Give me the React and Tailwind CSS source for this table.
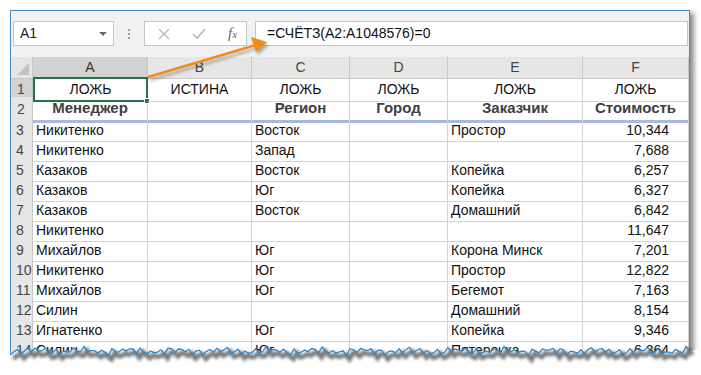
const cols = ['A', 'B', 'C', 'D', 'E', 'F'];
const gridCols = 'grid grid-cols-[22px_115px_104px_98px_98px_135px_106px]';

const rows = [
  ['Никитенко', '', 'Восток', '', 'Простор', '10,344'],
  ['Никитенко', '', 'Запад', '', '', '7,688'],
  ['Казаков', '', 'Восток', '', 'Копейка', '6,257'],
  ['Казаков', '', 'Юг', '', 'Копейка', '6,327'],
  ['Казаков', '', 'Восток', '', 'Домашний', '6,842'],
  ['Никитенко', '', '', '', '', '11,647'],
  ['Михайлов', '', 'Юг', '', 'Корона Минск', '7,201'],
  ['Никитенко', '', 'Юг', '', 'Простор', '12,822'],
  ['Михайлов', '', 'Юг', '', 'Бегемот', '7,163'],
  ['Силин', '', '', '', 'Домашний', '8,154'],
  ['Игнатенко', '', 'Юг', '', 'Копейка', '9,346'],
  ['Силин', '', 'Юг', '', 'Пятерочка', '6,364'],
];

const flags = ['ЛОЖЬ', 'ИСТИНА', 'ЛОЖЬ', 'ЛОЖЬ', 'ЛОЖЬ', 'ЛОЖЬ'];
const titles = ['Менеджер', '', 'Регион', 'Город', 'Заказчик', 'Стоимость'];

// jagged line where the sheet is "torn off"
function tornPoints() {
  const pts = [];
  let i = 0;
  for (let x = 0; x <= 701; x += 3.5) {
    const y = 16 + 2.4 * Math.sin(i * 2.3) + 1.3 * Math.sin(i * 0.47) + ((i * 5) % 4) * 0.7 - 1;
    pts.push([x, y]);
    i++;
  }
  return pts;
}

function TornEdge() {
  const pts = tornPoints();
  const line = pts.map(([x, y], i) => `${i ? 'L' : 'M'}${x.toFixed(1)} ${y.toFixed(1)}`).join(' ');
  const inner = pts.filter(([x]) => x >= 8 && x <= 692);
  const edge = inner.map(([x, y], i) => `${i ? 'L' : 'M'}${x.toFixed(1)} ${y.toFixed(1)}`).join(' ');
  const shadow = inner.map(([x, y], i) => `${i ? 'L' : 'M'}${(x + 3).toFixed(1)} ${(y + 4).toFixed(1)}`).join(' ');
  return (
    <svg className="absolute left-0 top-[335px]" width="701" height="40" viewBox="0 0 701 40">
      <defs>
        <filter id="soft" x="-5%" y="-100%" width="110%" height="300%">
          <feGaussianBlur stdDeviation="1.6" />
        </filter>
      </defs>
      <path d={`${line} L701 40 L0 40 Z`} fill="#fff" />
      <path d={shadow} stroke="#5f5f5f" strokeWidth="4.5" fill="none" filter="url(#soft)" opacity="0.85" />
      <path d={edge} stroke="#2f86c8" strokeWidth="1.3" fill="none" />
    </svg>
  );
}

function Arrow() {
  return (
    <svg className="pointer-events-none absolute left-0 top-0" width="701" height="120" viewBox="0 0 701 120">
      <defs>
        <filter id="ash" x="-10%" y="-50%" width="120%" height="200%">
          <feGaussianBlur stdDeviation="1.5" />
        </filter>
      </defs>
      <g opacity="0.45" filter="url(#ash)" transform="translate(2 3)">
        <line x1="148" y1="77" x2="256" y2="45" stroke="#555" strokeWidth="2.5" />
        <path d="M267 42 L251 37 L256 52 Z" fill="#555" />
      </g>
      <line x1="148" y1="77" x2="256" y2="45" stroke="#f28a1a" strokeWidth="2.5" />
      <path d="M267 42 L251 37 L256 52 Z" fill="#f28a1a" />
    </svg>
  );
}

function FormulaBar() {
  return (
    <div className="flex items-center pl-[2px] pr-[1px] pt-[10px]">
      <div className="flex h-[25px] w-[101px] items-center justify-between border border-[#c6c6c6] bg-white pl-[6px] pr-[6px] text-[14px] text-[#222]">
        <span>A1</span>
        <span className="h-0 w-0 border-x-[4px] border-t-[4px] border-x-transparent border-t-[#6b6b6b]" />
      </div>
      <div className="ml-[14px] flex h-[10px] flex-col justify-between">
        <span className="h-[2px] w-[2px] bg-[#a0a0a0]" />
        <span className="h-[2px] w-[2px] bg-[#a0a0a0]" />
        <span className="h-[2px] w-[2px] bg-[#a0a0a0]" />
      </div>
      <div className="ml-[14px] flex h-[25px] w-[103px] items-center border border-[#c6c6c6] bg-white text-[#b5b5b5]">
        <svg className="ml-[13px]" width="12" height="12" viewBox="0 0 12 12">
          <path d="M1 1 L11 11 M11 1 L1 11" stroke="#b7b7b7" strokeWidth="1.3" />
        </svg>
        <svg className="ml-[22px]" width="14" height="12" viewBox="0 0 14 12">
          <path d="M1 6 L5 10 L13 1" stroke="#b7b7b7" strokeWidth="1.6" fill="none" />
        </svg>
        <span className="ml-[22px] font-['Liberation_Serif',serif] text-[15px] italic text-[#666]">
          f<span className="text-[11px]">x</span>
        </span>
      </div>
      <div className="ml-[8px] flex h-[25px] flex-1 items-center border border-[#c6c6c6] bg-white pl-[11px] text-[14px] text-[#111]">
        =СЧЁТЗ(A2:A1048576)=0
      </div>
    </div>
  );
}

export default function App() {
  return (
    <div className="relative h-[375px] w-[701px] overflow-hidden bg-white font-['Liberation_Sans',sans-serif]">
      <div className="ml-[10px] mt-[10px] h-[346px] w-[680px] overflow-hidden border border-[#3b8ed0] bg-[#f1f1f1] shadow-[4px_3px_5px_rgba(0,0,0,0.45)]">
        <FormulaBar />

        <div className="mt-[11px] bg-white">
          {/* column headers */}
          <div className={`${gridCols} h-[20px] text-[14px] text-[#444]`}>
            <div className="relative border-b border-r border-[#c8c8c8] bg-[#e6e6e6]">
              <span className="absolute bottom-[3px] right-[3px] h-0 w-0 border-b-[12px] border-l-[12px] border-b-[#c2c2c2] border-l-transparent" />
            </div>
            {cols.map((c, i) => (
              <div
                key={c}
                className={`flex items-center justify-center border-b border-r border-[#c8c8c8] ${
                  i === 0 ? 'bg-[#d2d2d2] text-[#333]' : 'bg-[#e6e6e6]'
                }`}
              >
                {c}
              </div>
            ))}
          </div>

          {/* row 1 */}
          <div className={`${gridCols} h-[20px] text-[14px] text-[#111]`}>
            <div className="flex items-center border-b border-r border-[#c8c8c8] bg-[#d2d2d2] pl-[6px] text-[#444]">
              1
            </div>
            {flags.map((f, i) => (
              <div
                key={i}
                className={`relative flex items-center justify-center ${
                  i === 0 ? 'border-2 border-[#217346]' : 'border-b border-r border-[#d4d4d4]'
                }`}
              >
                {f}
                {i === 0 && (
                  <span className="absolute -bottom-[4px] -right-[4px] h-[6px] w-[6px] border border-white bg-[#217346]" />
                )}
              </div>
            ))}
          </div>

          {/* row 2 */}
          <div className={`${gridCols} h-[23px] text-[15px] font-bold text-[#404040]`}>
            <div className="flex items-center border-r border-[#c8c8c8] bg-[#e6e6e6] pl-[6px] text-[14px] font-normal text-[#444]">
              2
            </div>
            {titles.map((t, i) => (
              <div key={i} className="flex items-center justify-center border-b-[3px] border-r border-[#d4d4d4] border-b-[#a9b9dc]">
                {t}
              </div>
            ))}
          </div>

          {rows.map((r, ri) => (
            <div key={ri} className={`${gridCols} h-[20px] text-[14px] text-[#111]`}>
              <div className="flex items-center border-b border-r border-[#c8c8c8] bg-[#e6e6e6] pl-[5px] text-[#444]">
                {ri + 3}
              </div>
              {r.map((v, ci) => (
                <div
                  key={ci}
                  className={`flex items-center border-b border-r border-[#d4d4d4] ${
                    ci === 5 ? 'justify-end pr-[19px]' : 'pl-[3px]'
                  }`}
                >
                  {v}
                </div>
              ))}
            </div>
          ))}
        </div>
      </div>

      <Arrow />
      <TornEdge />
    </div>
  );
}
